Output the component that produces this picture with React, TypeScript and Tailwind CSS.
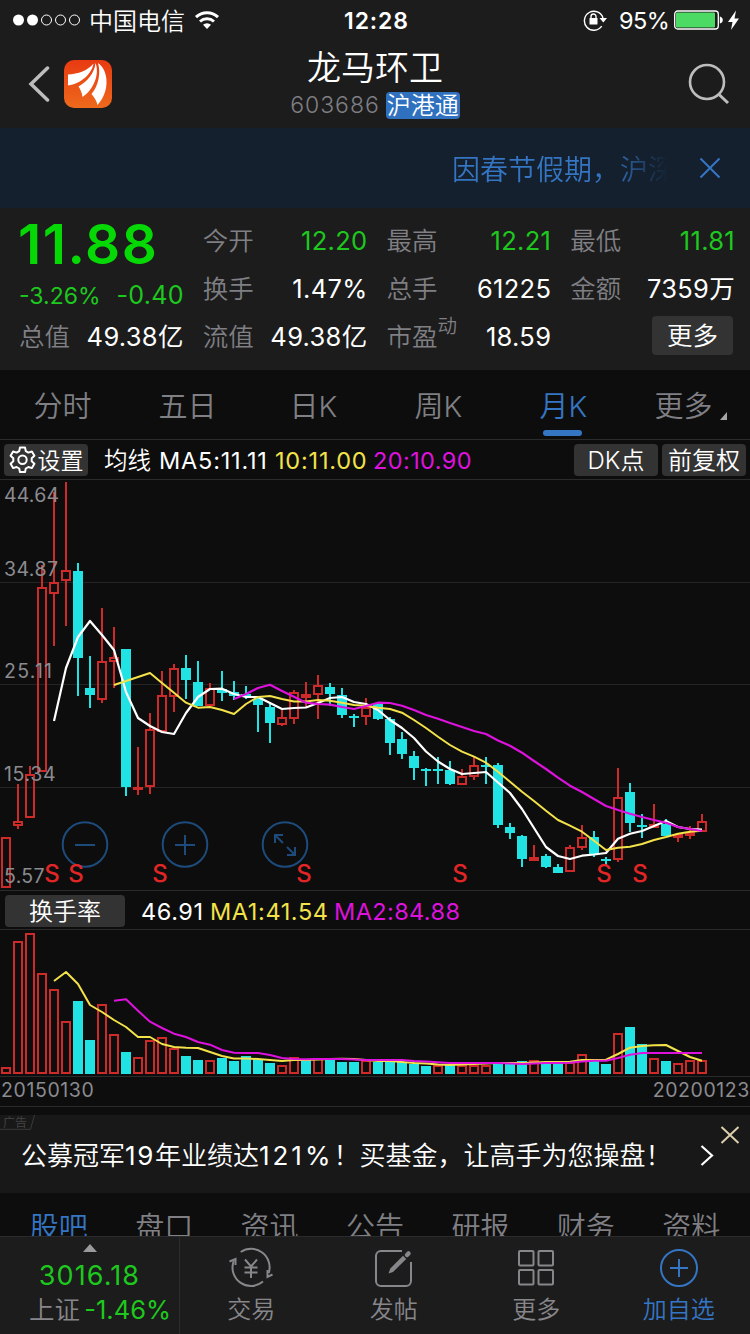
import { clsx } from 'clsx';
import type { ReactNode } from 'react';

const RED = '#cf2a2a';
const CYAN = '#22e3e3';
const YELLOW = '#f3e24a';
const MAGENTA = '#dd12dd';
const STEP = 12;

// [direction, high, body top, body bottom, low]
type Candle = ['u' | 'd', number, number, number, number];

const candles: Candle[] = [
  ['u', 837, 837, 888, 888],
  ['u', 784, 821, 826, 829],
  ['u', 766, 774, 818, 818],
  ['u', 565, 587, 772, 772],
  ['u', 492, 582, 594, 646],
  ['u', 482, 570, 581, 626],
  ['d', 563, 571, 658, 696],
  ['d', 656, 688, 695, 708],
  ['u', 608, 661, 700, 703],
  ['u', 627, 657, 662, 688],
  ['d', 649, 649, 787, 796],
  ['u', 747, 787, 790, 795],
  ['u', 713, 729, 787, 794],
  ['u', 671, 695, 732, 732],
  ['u', 664, 668, 697, 712],
  ['d', 655, 668, 680, 699],
  ['d', 661, 682, 706, 706],
  ['u', 683, 688, 706, 706],
  ['d', 671, 689, 693, 701],
  ['d', 681, 692, 696, 700],
  ['d', 686, 694, 697, 699],
  ['d', 696, 699, 705, 732],
  ['d', 703, 707, 723, 743],
  ['u', 710, 717, 725, 726],
  ['u', 690, 692, 719, 724],
  ['u', 682, 694, 698, 707],
  ['u', 675, 685, 695, 719],
  ['d', 683, 687, 694, 706],
  ['d', 688, 695, 715, 718],
  ['d', 714, 716, 717, 727],
  ['u', 698, 707, 717, 725],
  ['d', 703, 704, 719, 720],
  ['d', 717, 719, 743, 755],
  ['d', 732, 739, 754, 759],
  ['d', 751, 756, 768, 780],
  ['d', 768, 769, 770, 786],
  ['d', 757, 769, 770, 784],
  ['d', 761, 770, 784, 785],
  ['u', 769, 776, 785, 785],
  ['u', 757, 765, 777, 780],
  ['d', 757, 765, 766, 784],
  ['d', 763, 765, 825, 828],
  ['d', 823, 827, 833, 839],
  ['d', 835, 836, 859, 867],
  ['u', 845, 857, 861, 861],
  ['d', 854, 856, 867, 868],
  ['d', 864, 867, 873, 873],
  ['u', 845, 847, 872, 872],
  ['u', 825, 837, 848, 850],
  ['d', 831, 837, 855, 857],
  ['d', 857, 859, 860, 865],
  ['u', 768, 797, 860, 862],
  ['d', 783, 792, 823, 832],
  ['d', 814, 825, 827, 838],
  ['u', 804, 824, 828, 828],
  ['d', 819, 824, 836, 836],
  ['u', 833, 834, 838, 842],
  ['u', 826, 832, 836, 839],
  ['u', 814, 821, 832, 832],
];

// Averages: one value per month, starting at the given candle
const ma5 = [
  721, 668, 637, 621, 635, 650, 692, 718, 726, 732, 734, 713, 697, 689, 688.7, 694, 697, 697, 703, 709, 708, 707.5,
  703, 698, 697, 702, 704, 710, 720, 728, 738, 751.5, 761.5, 769, 774, 773, 772, 782.5, 793, 809, 828, 847, 856, 859,
  855.7, 854.5, 853, 838.7, 833.7, 831, 826, 821, 827, 829, 829.5,
];
const ma10 = [
  685, 681, 677, 673, 683, 692.7, 702.7, 707.7, 707, 710, 714, 704, 697, 696, 699, 701.5, 701.5, 700, 700.7, 702.7, 705,
  705.7, 707.7, 709, 712.7, 720, 728, 736.7, 745, 751.7, 756.7, 762.7, 771.7, 781.7, 791.7, 801, 810.7, 820, 825.7,
  831.7, 840.7, 850, 847.7, 846.7, 844, 840, 837, 833.7, 831.7, 830.7,
];
const ma20 = [
  699, 694, 688, 684.7, 691, 696.7, 702.7, 704, 704.7, 707, 709, 706, 702.7, 703, 705.7, 710, 715, 718.7, 723, 727, 731,
  734, 740.5, 745.7, 752.7, 761, 769, 777.7, 785.7, 792, 799, 806, 810, 813.7, 817, 820, 822.7, 827, 829, 831,
];

const volumes: ['u' | 'd', number][] = [
  ['u', 1067], ['u', 941], ['u', 933], ['u', 973], ['u', 989], ['u', 1021], ['d', 1001], ['d', 1040],
  ['u', 1004], ['u', 1034], ['d', 1052], ['u', 1057], ['u', 1040], ['u', 1037], ['u', 1048], ['d', 1056],
  ['d', 1060], ['u', 1060], ['d', 1058], ['d', 1061], ['d', 1056], ['d', 1059], ['d', 1063], ['u', 1065],
  ['u', 1057], ['d', 1060], ['u', 1058], ['d', 1058], ['d', 1062], ['d', 1062], ['u', 1060], ['d', 1062],
  ['d', 1062], ['d', 1062], ['d', 1064], ['d', 1066], ['u', 1065], ['d', 1065], ['u', 1065], ['u', 1065],
  ['u', 1065], ['d', 1064], ['d', 1064], ['d', 1061], ['u', 1060], ['d', 1063], ['d', 1062], ['u', 1062],
  ['u', 1054], ['d', 1061], ['d', 1064], ['u', 1033], ['d', 1027], ['d', 1044], ['u', 1058], ['d', 1061],
  ['u', 1063], ['u', 1060], ['u', 1060],
];

const volMa1 = [
  981, 972, 984, 1005, 1012, 1020, 1027, 1037, 1037, 1044, 1047, 1047.7, 1048, 1052, 1056, 1058.5, 1058.5, 1059, 1060,
  1061, 1060, 1060, 1059.5, 1059, 1058.7, 1059, 1060, 1061, 1061, 1062, 1063, 1063.5, 1064.5, 1065, 1064.5, 1064, 1063.5,
  1063, 1063, 1063, 1062.5, 1062, 1062, 1061.7, 1060, 1060, 1059.7, 1054, 1047.7, 1046, 1045.3, 1045, 1051, 1057, 1060.7,
];
const volMa2 = [
  1000.7, 999.3, 1010.7, 1021.7, 1028, 1033.7, 1037, 1042, 1044.7, 1050, 1052.7, 1053, 1053, 1055, 1058, 1059, 1059.3,
  1059, 1059, 1059, 1059.5, 1060, 1060, 1060, 1060, 1061, 1061.5, 1062.3, 1063, 1063, 1063, 1063, 1063, 1063.5, 1064,
  1063.5, 1063, 1063, 1062.7, 1061.5, 1060.7, 1060.7, 1058, 1054.7, 1053, 1053, 1053, 1053, 1053, 1053,
];

// [text, baseline, drawn width]
const axisLabels: [string, number, number][] = [
  ['44.64', 502, 55],
  ['34.87', 576, 54],
  ['25.11', 678, 48],
  ['15.34', 781, 51.5],
  ['5.57', 882.5, 40.5],
];

const signals = [52, 76, 160, 304, 460, 604, 640];

function Line({ values, start, color, width = 2 }: { values: number[]; start: number; color: string; width?: number }) {
  const points = values.map((y, i) => `${6 + (start + i) * STEP},${y}`).join(' ');
  return <polyline points={points} fill="none" stroke={color} strokeWidth={width} strokeLinejoin="round" />;
}

function CandleShape({ candle, x }: { candle: Candle; x: number }) {
  const [dir, high, top, bottom, low] = candle;
  const h = bottom - top;
  if (dir === 'd') {
    return (
      <g fill={CYAN}>
        <rect x={x - 1} y={high} width={2} height={low - high} />
        <rect x={x - 5} y={top} width={10} height={Math.max(h, 2)} />
      </g>
    );
  }
  return (
    <g fill={RED}>
      <rect x={x - 1} y={high} width={2} height={top - high} />
      <rect x={x - 1} y={bottom} width={2} height={low - bottom} />
      {h <= 4 ? (
        <rect x={x - 5} y={top} width={10} height={h} />
      ) : (
        <rect x={x - 4} y={top + 1} width={8} height={h - 2} fill="none" stroke={RED} strokeWidth={2} />
      )}
    </g>
  );
}

function PriceChart() {
  return (
    <svg className="block font-normal" width={750} height={410} viewBox="0 480 750 410">
      {[582.5, 684.5, 787.5].map((y) => (
        <line key={y} x1={0} x2={750} y1={y} y2={y} stroke="#242424" />
      ))}
      {candles.map((candle, i) => (
        <CandleShape key={i} candle={candle} x={6 + i * STEP} />
      ))}
      <g fill="none" stroke="#1d4b7c" strokeWidth={2}>
        <circle cx={85} cy={844.5} r={22.3} />
        <circle cx={185} cy={844.5} r={22.3} />
        <circle cx={285} cy={844.5} r={22.3} />
        <path d="M75 845h20M175 845h20M185 835v20" />
        <path d="M275 843v-8h8M275 835l8 8M287 847l8 8M295 847v8h-8" />
      </g>
      <Line values={ma5} start={4} color="#ffffff" width={2.2} />
      <Line values={ma10} start={9} color={YELLOW} />
      <Line values={ma20} start={19} color={MAGENTA} width={2.2} />
      <g fill="#8b8b90" fontSize={19.5}>
        {axisLabels.map(([label, y, width]) => (
          <text key={label} x={4} y={y} textLength={width}>
            {label}
          </text>
        ))}
      </g>
      <g fill="#e02626" fontSize={24} fontWeight={500} textAnchor="middle">
        {signals.map((x) => (
          <text key={x} x={x} y={882}>
            S
          </text>
        ))}
      </g>
    </svg>
  );
}

function VolumeChart() {
  return (
    <svg className="block" width={750} height={146} viewBox="0 930 750 146">
      {volumes.map(([dir, top], i) => {
        const x = 6 + i * STEP;
        return dir === 'd' ? (
          <rect key={i} x={x - 5} y={top} width={10} height={1074 - top} fill={CYAN} />
        ) : (
          <rect key={i} x={x - 4} y={top + 1} width={8} height={1072 - top} fill="none" stroke={RED} strokeWidth={2} />
        );
      })}
      <Line values={volMa1} start={4} color={YELLOW} />
      <Line values={volMa2} start={9} color={MAGENTA} />
    </svg>
  );
}

function StatusBar() {
  return (
    <div className="flex h-10 items-center pr-2 pl-[13px] text-white">
      <svg width={68} height={12} viewBox="0 0 68 12">
        <circle cx={5.5} cy={6} r={5.5} fill="#fff" />
        <circle cx={19.5} cy={6} r={5.5} fill="#fff" />
        <g fill="none" stroke="#fff">
          <circle cx={33.5} cy={6} r={5} />
          <circle cx={47.5} cy={6} r={5} />
          <circle cx={61.5} cy={6} r={5} />
        </g>
      </svg>
      <span className="ml-2 w-[96px] pt-[3px] text-[24px] leading-10 whitespace-nowrap">中国电信</span>
      <svg className="ml-[9px]" width={26} height={20} viewBox="0 0 26 20">
        <path d="M2 7.200a16 16 0 0 1 22 0M6 11.500a10.500 10.500 0 0 1 14 0" fill="none" stroke="#fff" strokeWidth={3} />
        <path d="M13 19l-4-4.200a6 6 0 0 1 8 0z" fill="#fff" />
      </svg>
      <span className="ml-[124px] w-[67px] pt-px text-[23px] leading-10 font-semibold tracking-[0.9px] whitespace-nowrap">
        12:28
      </span>
      <svg className="ml-[172px]" width={24} height={22} viewBox="0 0 24 22">
        <path d="M18.700 17.200A9.500 9.500 0 1 1 20 9" fill="none" stroke="#fff" strokeWidth={1.4} />
        <path d="M16.500 9h7.500l-3.700 4.500z" fill="#fff" />
        <rect x={6.5} y={9} width={8} height={6.5} rx={0.5} fill="#fff" />
        <path d="M8 9.500V7.500a2.500 2.500 0 0 1 5 0v2" fill="none" stroke="#fff" strokeWidth={1.4} />
      </svg>
      <span className="ml-3 w-[49px] pt-0.5 text-[23.5px] leading-10 font-normal tracking-[-0.5px] whitespace-nowrap">95%</span>
      <svg className="ml-[6px] shrink-0" width={67} height={20} viewBox="0 0 67 20">
        <rect x={0.7} y={1} width={43.6} height={18} rx={3} fill="none" stroke="#fff" strokeWidth={1.3} />
        <rect x={2} y={2.5} width={39} height={15} rx={1} fill="#4cd964" />
        <path d="M45.800 6.500q3 1 3 3.500t-3 3.500z" fill="#fff" />
        <path d="M62 0.500l-8 11.500h4.500l-1.500 8 8-11.500h-4.500z" fill="#fff" />
      </svg>
    </div>
  );
}

function NavBar() {
  return (
    <div className="flex h-[88px] items-start justify-between pr-5 pl-7">
      <div className="mt-5 flex w-[160px] items-center">
        <svg width={22} height={36} viewBox="0 0 22 36">
          <path d="M19.500 2L3 18l16.500 16" fill="none" stroke="#bdbdbd" strokeWidth={3.5} strokeLinecap="round" />
        </svg>
        <svg className="ml-[14px]" width={48} height={48} viewBox="0 0 48 48">
          <defs>
            <linearGradient id="logo" x1="0" y1="0" x2="0" y2="1">
              <stop offset="0" stopColor="#e83a12" />
              <stop offset="1" stopColor="#ee6a1c" />
            </linearGradient>
          </defs>
          <rect width={48} height={48} rx={10} fill="url(#logo)" />
          <path d="M4 14.500C14 14 24 10.500 29.500 3.500C28 14 17 23.500 4 25.500Z" fill="#fff" />
          <path d="M14.500 26.500C23 22 30.500 13 31.500 3C36 14 29.500 30 18.500 37C18 33 16.500 29.500 14.500 26.500Z" fill="#fff" />
          <path d="M27.500 34C34.500 26 37 13 34 3C44.500 10 46.500 31 33.500 45C32.500 41 30.500 37.500 27.500 34Z" fill="#fff" />
        </svg>
      </div>
      <div className="flex flex-col items-center">
        <div className="mt-[6px] text-[34px] leading-[44px] text-white">龙马环卫</div>
        <div className="mt-px flex items-center gap-[6px]">
          <span className="pt-px text-[23px] leading-[27px] font-[350] tracking-[1px] text-[#7f7f84]">603686</span>
          <span className="h-[27px] w-[74px] rounded bg-[#3071bf] text-center text-[24px] leading-[28px] whitespace-nowrap text-white">
            沪港通
          </span>
        </div>
      </div>
      <div className="flex w-[168px] justify-end">
        <svg className="mt-[22px]" width={42} height={44} viewBox="0 0 42 44">
          <circle cx={19} cy={20} r={17} fill="none" stroke="#bdbdbd" strokeWidth={2.6} />
          <path d="M30.500 32L40 41" stroke="#bdbdbd" strokeWidth={3} />
        </svg>
      </div>
    </div>
  );
}

function Notice() {
  return (
    <div className="flex h-20 items-center justify-end bg-[#14202e] pr-[29px]">
      <div className="mt-[4px] w-[216px] overflow-hidden bg-linear-to-r from-[#3576c4] from-72% to-transparent bg-clip-text text-[28px] leading-10 whitespace-nowrap text-transparent">
        因春节假期，沪深
      </div>
      <svg className="ml-[31px]" width={22} height={22} viewBox="0 0 22 22">
        <path d="M1.500 1.500l19 19M20.500 1.500l-19 19" stroke="#3576c4" strokeWidth={2} />
      </svg>
    </div>
  );
}

function Quote({ label, value, green, sup }: { label: string; value: string; green?: boolean; sup?: string }) {
  return (
    <div className="flex h-12 items-center justify-between pt-px">
      <span className="relative text-[25.5px] whitespace-nowrap text-[#7f7f84]">
        {label}
        {sup && <span className="absolute -top-1.5 left-[51px] text-[19.5px]">{sup}</span>}
      </span>
      <span
        className={clsx(
          'text-[25.5px] font-normal tracking-[0.3px] whitespace-nowrap',
          green ? 'text-[#1ec81e]' : 'text-white'
        )}
      >
        {value}
      </span>
    </div>
  );
}

function QuotePanel() {
  return (
    <div className="grid h-[162px] grid-cols-4 gap-x-[19px] pt-[9px] pr-[15px] pl-[19px]">
      <div>
        <div className="-ml-px h-[68px] text-[55px] leading-[54px] font-semibold tracking-[1.5px] text-[#06d806]">
          11.88
        </div>
        <div className="-mt-[3px] mb-[3px] flex h-[28px] items-center justify-between font-normal whitespace-nowrap text-[#1ec81e]">
          <span className="text-[23px]">-3.26%</span>
          <span className="text-[25px] tracking-[0.3px]">-0.40</span>
        </div>
        <Quote label="总值" value="49.38亿" />
      </div>
      <div>
        <Quote label="今开" value="12.20" green />
        <Quote label="换手" value="1.47%" />
        <Quote label="流值" value="49.38亿" />
      </div>
      <div>
        <Quote label="最高" value="12.21" green />
        <Quote label="总手" value="61225" />
        <Quote label="市盈" value="18.59" sup="动" />
      </div>
      <div>
        <Quote label="最低" value="11.81" green />
        <Quote label="金额" value="7359万" />
        <div className="mt-[3px] mr-[2px] ml-auto h-[39px] w-[81px] rounded bg-[#333333] text-center text-[25.5px] leading-[40px] text-white">
          更多
        </div>
      </div>
    </div>
  );
}

function PeriodTabs() {
  const tabs = ['分时', '五日', '日K', '周K', '月K', '更多'];
  return (
    <div className="flex h-[70px] border-b border-[#2b2b2b] bg-[#0d0d0d]">
      {tabs.map((tab) => (
        <div
          key={tab}
          className={clsx(
            'relative w-[125px] text-center text-[29px] leading-[73px]',
            tab === '月K' ? 'text-[#3576c4]' : 'text-[#7f7f84]',
            tab === '更多' && 'pr-2',
            tab.endsWith('K') && 'pl-0.5'
          )}
        >
          {tab}
          {tab === '月K' && <div className="absolute bottom-[3px] left-[43px] h-[6px] w-[39px] rounded-sm bg-[#3576c4]" />}
          {tab === '更多' && (
            <svg className="absolute right-[23px] bottom-[19px]" width={7} height={8} viewBox="0 0 7 8">
              <path d="M7 0v8H0z" fill="#a5a5a5" />
            </svg>
          )}
        </div>
      ))}
    </div>
  );
}

function Chip({ className, children }: { className: string; children: ReactNode }) {
  return (
    <div
      className={clsx(
        'flex h-8 items-center justify-center rounded bg-[#333333] text-[24px] leading-8 whitespace-nowrap text-white',
        className
      )}
    >
      {children}
    </div>
  );
}

function ChartToolbar() {
  return (
    <div className="flex h-10 items-center border-b border-[#2b2b2b] px-1 text-[23.5px] whitespace-nowrap">
      <Chip className="w-[84px]">
        <svg width={27} height={27} viewBox="0 0 27 27" fill="none" stroke="#fff" strokeWidth={2}>
          <path d="M11 1.500h5l.8 3.600 2.600 1.500 3.500-1.100 2.500 4.300-2.700 2.500v3l2.700 2.500-2.500 4.300-3.500-1.100-2.600 1.500-.8 3.600h-5l-.8-3.600-2.600-1.500-3.500 1.100-2.500-4.300 2.700-2.500v-3L1.600 9.800l2.500-4.300 3.500 1.100 2.600-1.500z" strokeLinejoin="round" />
          <circle cx={13.5} cy={13.8} r={4.2} />
        </svg>
        <span className="ml-[2px] pt-0.5 text-[23px]">设置</span>
      </Chip>
      <span className="ml-4 w-[55px] pt-0.5 text-white">均线</span>
      <span className="w-[116px] pt-0.5 font-normal tracking-[0.8px] text-white">MA5:11.11</span>
      <span className="w-[98px] pt-0.5 font-normal tracking-[0.8px] text-[#f3e24a]">10:11.00</span>
      <span className="pt-0.5 font-normal tracking-[0.4px] text-[#dd12dd]">20:10.90</span>
      <Chip className="ml-auto w-[84px] pt-0.5">DK点</Chip>
      <Chip className="ml-1 w-[84px] pt-0.5">前复权</Chip>
    </div>
  );
}

function VolumeHeader() {
  return (
    <div className="flex h-10 items-center border-y border-[#2b2b2b] pt-px pl-[5px] text-[23.5px] whitespace-nowrap">
      <Chip className="w-[120px] pt-0.5">换手率</Chip>
      <span className="ml-4 w-[69px] pt-0.5 font-normal tracking-[0.6px] text-white">46.91</span>
      <span className="w-[124px] pt-0.5 font-normal tracking-[0.6px] text-[#f3e24a]">MA1:41.54</span>
      <span className="pt-0.5 font-normal tracking-[0.4px] text-[#dd12dd]">MA2:84.88</span>
    </div>
  );
}

function AdBanner() {
  return (
    <div className="relative mt-2 flex h-[78px] items-center bg-[#181818] pl-[21px] text-white">
      <span className="pt-0.5 text-[26px] whitespace-nowrap">
        公募冠军<span className="font-normal tracking-[1.6px]">19</span>年业绩达
        <span className="font-normal tracking-[3px]">121%</span>！买基金，让高手为您操盘！
      </span>
      <svg className="absolute top-[30px] left-[700px]" width={14} height={21} viewBox="0 0 14 21">
        <path d="M1.500 1l10.500 9.500L1.500 20" fill="none" stroke="#fff" strokeWidth={2.2} />
      </svg>
      <svg className="absolute top-[11px] left-[720px]" width={20} height={18} viewBox="0 0 20 18">
        <path d="M1.500 1l17 16M18.500 1l-17 16" stroke="#dccfae" strokeWidth={2} />
      </svg>
      <div className="absolute top-0 left-0 flex h-[15px] w-9 pl-[3px] text-[12px] leading-[15px] text-[#464646]">
        广告
        <svg className="absolute top-0 left-0" width={36} height={15} viewBox="0 0 36 15">
          <path d="M0 14.300H30.500L34.500 0" fill="none" stroke="#3a3a3a" />
        </svg>
      </div>
    </div>
  );
}

function InfoTabs() {
  return (
    <div className="flex h-[43px] overflow-hidden bg-[#0d0d0d] px-[6px]">
      {['股吧', '盘口', '资讯', '公告', '研报', '财务', '资料'].map((tab, i) => (
        <div
          key={tab}
          className={clsx('flex-1 text-center text-[29px] leading-[70px]', i === 0 ? 'text-[#3576c4]' : 'text-[#7f7f84]')}
        >
          {tab}
        </div>
      ))}
    </div>
  );
}

function BottomItem({ label, active, children }: { label: string; active?: boolean; children: ReactNode }) {
  return (
    <div className={clsx('flex flex-1 flex-col items-center pt-[10px]', active ? 'text-[#3576c4]' : 'text-[#87878b]')}>
      <svg width={44} height={42} viewBox="0 0 44 42" fill="none" stroke="currentColor" strokeWidth={2}>
        {children}
      </svg>
      <span className="mt-[5px] text-[24px] leading-8">{label}</span>
    </div>
  );
}

function BottomBar() {
  return (
    <div className="flex h-[98px] border-t border-[#2b2b2b] bg-[#1c1c1c]">
      <div className="flex w-[180px] flex-col items-center border-r border-[#2b2b2b] whitespace-nowrap">
        <svg className="mt-[7px]" width={14} height={8} viewBox="0 0 14 8">
          <path d="M7 0l7 8H0z" fill="#9a9a9e" />
        </svg>
        <span className="mt-[7px] text-[27px] leading-[34px] font-normal tracking-[1.1px] text-[#1ec81e]">3016.18</span>
        <div className="-mt-px flex w-full justify-between pr-[8px] pl-[29px] leading-[36px]">
          <span className="text-[25.5px] text-[#87878b]">上证</span>
          <span className="text-[25.5px] font-normal text-[#1ec81e]">-1.46%</span>
        </div>
      </div>
      <BottomItem label="交易">
        <path d="M11.700 5A18.500 18.500 0 0 1 39.700 26M34 34.600A18.500 18.500 0 0 1 4.700 14" />
        <path d="M0.500 14.500L6.500 12v6M43.500 27.500L38.500 30v-7" />
        <path d="M16 12.500L22 19.500l6-7M22 19.500v11.500M15.500 20.500h13M15.500 25.500h13" />
      </BottomItem>
      <BottomItem label="发帖">
        <path d="M30 4H9a5 5 0 0 0-5 5v25a5 5 0 0 0 5 5h25a5 5 0 0 0 5-5V15" />
        <path d="M16.500 26.500l1.800-5L31 8.800l3.200 3.200L21 25z" fill="currentColor" stroke="none" />
        <path d="M35 8l1.500-1.500" strokeWidth={4.5} strokeLinecap="round" />
      </BottomItem>
      <BottomItem label="更多">
        <rect x={5} y={4} width={14.5} height={14.5} rx={1} />
        <rect x={24.5} y={4} width={14.5} height={14.5} rx={1} />
        <rect x={5} y={23} width={14.5} height={14.5} rx={1} />
        <rect x={24.5} y={23} width={14.5} height={14.5} rx={1} />
      </BottomItem>
      <BottomItem label="加自选" active>
        <circle cx={22} cy={21} r={18} />
        <path d="M22 12v18M13 21h18" />
      </BottomItem>
    </div>
  );
}

export default function App() {
  return (
    <div className="h-[1334px] w-[750px] overflow-hidden bg-[#0d0d0d] font-['Inter','Noto_Sans_CJK_SC',sans-serif] font-[350]">
      <div className="bg-[#1c1c1c]">
        <StatusBar />
        <NavBar />
        <Notice />
        <QuotePanel />
      </div>
      <PeriodTabs />
      <ChartToolbar />
      <PriceChart />
      <VolumeHeader />
      <VolumeChart />
      <div className="flex h-[31px] items-center justify-between border-y border-[#2b2b2b] pb-px pl-px text-[19.5px] font-normal tracking-[0.6px] text-[#8b8b90]">
        <span>20150130</span>
        <span>20200123</span>
      </div>
      <AdBanner />
      <InfoTabs />
      <BottomBar />
    </div>
  );
}
